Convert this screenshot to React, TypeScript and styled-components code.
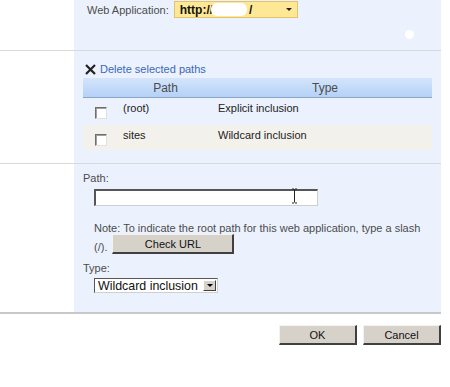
import React from "react";
import styled, { createGlobalStyle } from "styled-components";

const Global = createGlobalStyle`
  html, body { margin: 0; padding: 0; background: #fff; }
  body { font-family: Tahoma, "Liberation Sans", "DejaVu Sans", sans-serif; font-size: 11px; color: #4c4c4c; }
`;

const Page = styled.div`
  width: 441px;
  display: flex;
  flex-direction: column;
`;

const Section = styled.div<{ $h: number; $border?: string }>`
  display: flex;
  height: ${(p) => p.$h}px;
  border-bottom: ${(p) => p.$border || "1px solid #d9d9d9"};
`;

const LeftCol = styled.div`
  width: 74px;
  flex: none;
`;

const Panel = styled.div<{ $pt?: number }>`
  flex: 1;
  background: #ebf2fd;
  position: relative;
  padding-top: ${(p) => p.$pt ?? 0}px;
  display: flex;
  flex-direction: column;
`;

const WebAppRow = styled.div`
  display: flex;
  align-items: center;
  padding-left: 13px;
  gap: 5px;
`;

const Label = styled.span`
  color: #4c4c4c;
`;

const AppSelect = styled.div`
  width: 124px;
  height: 17px;
  box-sizing: border-box;
  border: 1px solid #e2c36a;
  background: #fee795;
  display: flex;
  align-items: center;
  padding-left: 5px;
  font-weight: bold;
  font-size: 12px;
  color: #111;
  position: relative;
`;

const Redact = styled.span`
  display: inline-block;
  width: 36px;
  height: 13px;
  background: #fff;
  border-radius: 6px;
  margin: 0 2px 0 -2px;
`;

const Arrow = styled.span`
  position: absolute;
  right: 5px;
  top: 6px;
  width: 0;
  height: 0;
  border-left: 3px solid transparent;
  border-right: 3px solid transparent;
  border-top: 3px solid #222;
`;

const Dot = styled.span`
  position: absolute;
  left: 331px;
  top: 30px;
  width: 9px;
  height: 9px;
  border-radius: 50%;
  background: #fff;
`;

const DeleteLink = styled.div`
  display: flex;
  align-items: center;
  margin-left: 10px;
  gap: 3px;
  color: #3a67b8;
  height: 18px;
`;

const Table = styled.div`
  margin-left: 9px;
  width: 349px;
  display: flex;
  flex-direction: column;
`;

const HeadRow = styled.div`
  display: grid;
  grid-template-columns: 135px 1fr;
  height: 19px;
  align-items: center;
  background: linear-gradient(#d4e5fb, #b4d1f7);
  border-bottom: 1px solid #8ea6c6;
  color: #4c4c4c;
  font-size: 12px;
`;

const HeadCell = styled.div<{ $ml?: number }>`
  text-align: center;
  padding-left: ${(p) => p.$ml ?? 0}px;
`;

const Row = styled.div<{ $alt?: boolean; $h: number }>`
  display: grid;
  grid-template-columns: 40px 95px 1fr;
  height: ${(p) => p.$h}px;
  align-items: start;
  background: ${(p) => (p.$alt ? "#f3f1ec" : "transparent")};
  color: #222;
  line-height: 13px;
`;

const Cell = styled.span`
  padding-top: 4px;
`;

const Check = styled.span`
  width: 10px;
  height: 10px;
  margin-left: 12px;
  margin-top: 9px;
  background: #fff;
  border-top: 1px solid #6e6e6e;
  border-left: 1px solid #6e6e6e;
  border-right: 1px solid #e0e0e0;
  border-bottom: 1px solid #e0e0e0;
  box-shadow: inset 1px 1px 0 #a0a0a0;
`;

const FieldLabel = styled.div`
  margin-left: 9px;
  color: #4c4c4c;
  line-height: 13px;
`;

const Indent = styled.div`
  margin-left: 20px;
`;

const TextInput = styled.div`
  width: 224px;
  height: 17px;
  box-sizing: border-box;
  background: #fff;
  border-top: 2px solid #555;
  border-left: 2px solid #555;
  border-right: 1px solid #cfcfcf;
  border-bottom: 1px solid #cfcfcf;
  position: relative;
`;

const Cursor = styled.svg`
  position: absolute;
  left: 195px;
  top: -3px;
`;

const Note = styled.div`
  color: #4c4c4c;
  line-height: 13px;
`;

const InlineRow = styled.div`
  display: flex;
  align-items: flex-end;
  gap: 5px;
  margin-top: -1px;
  line-height: 13px;
`;

const WinButton = styled.button<{ $w: number }>`
  width: ${(p) => p.$w}px;
  height: 20px;
  box-sizing: border-box;
  background: #d6d2ca;
  border-top: 1px solid #f4f2ee;
  border-left: 1px solid #f4f2ee;
  border-right: 2px solid #404040;
  border-bottom: 2px solid #404040;
  font-family: Tahoma, "Liberation Sans", "DejaVu Sans", sans-serif;
  font-size: 11px;
  color: #111;
  padding: 0;
`;

const TypeSelect = styled.div`
  width: 124px;
  height: 15px;
  box-sizing: border-box;
  background: #fff;
  border-top: 1px solid #555;
  border-left: 1px solid #555;
  border-right: 1px solid #cfcfcf;
  border-bottom: 1px solid #cfcfcf;
  display: flex;
  align-items: center;
  padding-left: 3px;
  font-family: "Liberation Sans", sans-serif;
  font-size: 12.4px;
  color: #111;
  justify-content: space-between;
`;

const SelBtn = styled.span`
  width: 13px;
  height: 11px;
  margin-right: 1px;
  background: #d6d2ca;
  border-right: 1px solid #404040;
  border-bottom: 1px solid #404040;
  border-top: 1px solid #fff;
  border-left: 1px solid #fff;
  box-sizing: border-box;
  display: flex;
  align-items: center;
  justify-content: center;
  &::after {
    content: "";
    border-left: 3px solid transparent;
    border-right: 3px solid transparent;
    border-top: 3px solid #000;
  }
`;

const Footer = styled.div`
  display: flex;
  justify-content: flex-end;
  gap: 6px;
  padding-top: 11px;
`;

const Spacer = styled.div<{ $h: number }>`
  height: ${(p) => p.$h}px;
  flex: none;
`;

export default function App() {
  return (
    <>
      <Global />
      <Page>
        <Section $h={50}>
          <LeftCol />
          <Panel $pt={1}>
            <WebAppRow>
              <Label>Web Application:</Label>
              <AppSelect>
                http://<Redact />/
                <Arrow />
              </AppSelect>
            </WebAppRow>
            <Dot />
          </Panel>
        </Section>
        <Section $h={112}>
          <LeftCol />
          <Panel $pt={9}>
            <DeleteLink>
              <svg width="13" height="13" viewBox="0 0 13 13">
                <path d="M2 2 L11 11 M11 2 L2 11" stroke="#222" strokeWidth="2.2" />
              </svg>
              <span>Delete selected paths</span>
            </DeleteLink>
            <Table>
              <HeadRow>
                <HeadCell $ml={30}>Path</HeadCell>
                <HeadCell>Type</HeadCell>
              </HeadRow>
              <Row $h={27}>
                <Check />
                <Cell>(root)</Cell>
                <Cell>Explicit inclusion</Cell>
              </Row>
              <Row $h={25} $alt>
                <Check />
                <Cell>sites</Cell>
                <Cell>Wildcard inclusion</Cell>
              </Row>
            </Table>
          </Panel>
        </Section>
        <Section $h={148} $border="2px solid #c8c8c8">
          <LeftCol />
          <Panel $pt={8}>
            <FieldLabel>Path:</FieldLabel>
            <Spacer $h={4} />
            <Indent>
              <TextInput>
                <Cursor width="7" height="16" viewBox="0 0 7 16">
                  <path d="M1 1 H3 M4 1 H6 M3.5 1.5 V14.5 M1 15 H3 M4 15 H6" stroke="#222" strokeWidth="1" fill="none" />
                </Cursor>
              </TextInput>
            </Indent>
            <Spacer $h={16} />
            <Indent>
              <Note>Note: To indicate the root path for this web application, type a slash</Note>
              <InlineRow>
                <span>(/).</span>
                <WinButton $w={122}>Check URL</WinButton>
              </InlineRow>
            </Indent>
            <Spacer $h={8} />
            <FieldLabel>Type:</FieldLabel>
            <Spacer $h={3} />
            <Indent>
              <TypeSelect>
                Wildcard inclusion
                <SelBtn />
              </TypeSelect>
            </Indent>
          </Panel>
        </Section>
        <Footer>
          <WinButton $w={78}>OK</WinButton>
          <WinButton $w={78}>Cancel</WinButton>
        </Footer>
      </Page>
    </>
  );
}
